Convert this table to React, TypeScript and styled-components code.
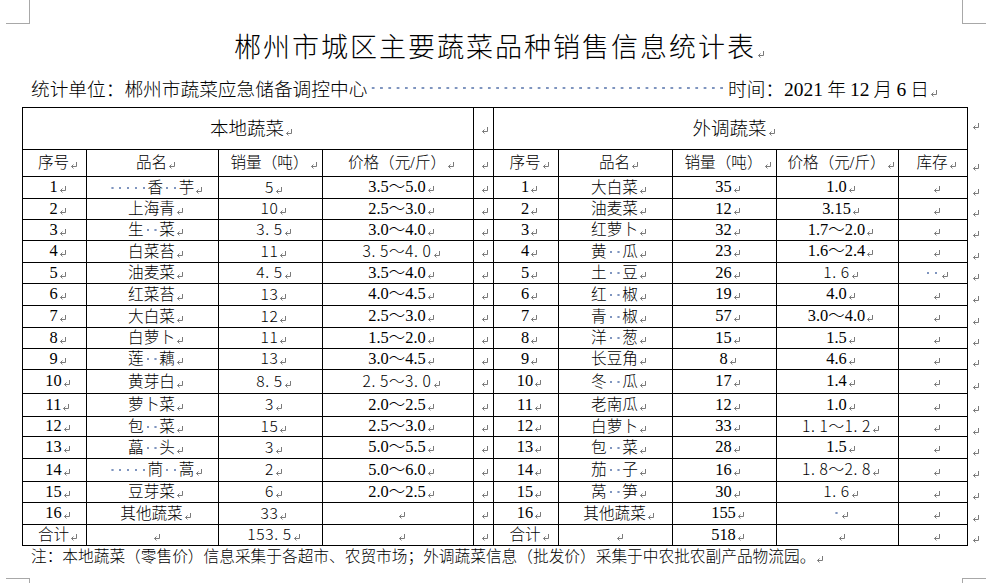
import React from 'react'
import styled, { createGlobalStyle } from 'styled-components'

const GlobalStyle = createGlobalStyle`
  html, body {
    margin: 0;
    padding: 0;
    background: #fff;
  }
  body {
    font-family: 'Noto Sans CJK SC', sans-serif;
    font-weight: 300;
    color: #000;
  }
`

const Page = styled.div`
  position: relative;
  width: 1001px;
  height: 583px;
  overflow: hidden;
  background: #fff;
`

// Word's page-corner crop marks
const Corner = styled.div<{ $pos: 'tl' | 'tr' | 'bl' | 'br' }>`
  position: absolute;
  width: 23px;
  height: 23px;
  border: 0 solid #a8a8a8;
  ${({ $pos }) =>
    $pos === 'tl'
      ? 'left: 6px; top: 0; border-right-width: 1px; border-bottom-width: 1px;'
      : $pos === 'tr'
      ? 'left: 962px; top: 0; border-left-width: 1px; border-bottom-width: 1px;'
      : $pos === 'bl'
      ? 'left: 6px; top: 578px; border-right-width: 1px; border-top-width: 1px;'
      : 'left: 962px; top: 578px; border-left-width: 1px; border-top-width: 1px;'}
`

const Sheet = styled.div`
  display: flex;
  flex-direction: column;
  width: 945px;
  margin-left: 22px;
  padding-top: 30px;
`

const Title = styled.h1`
  margin: 0;
  height: 32px;
  line-height: 32px;
  padding-left: 10px;
  text-align: center;
  font-size: 27px;
  font-weight: 300;
  letter-spacing: 2px;
  white-space: nowrap;
`

const InfoLine = styled.div`
  display: flex;
  align-items: center;
  margin-top: 12px;
  height: 26px;
  padding: 0 29px 0 9px;
  font-size: 18.7px;
  white-space: nowrap;
`

const Leader = styled.span`
  flex: 1;
  height: 4px;
  margin: 2px 2px 0;
  background-image: radial-gradient(circle, #7f95bf 1.1px, transparent 1.4px);
  background-size: 8.3px 4px;
  background-repeat: repeat-x;
`

const DateNum = styled.span`
  font-family: 'Liberation Serif', serif;
  font-weight: 400;
  font-size: 19.5px;
`

const Grid = styled.table`
  margin-top: 7px;
  border-collapse: collapse;
  table-layout: fixed;
  width: 970px;
`

const Row = styled.tr<{ $h: number }>`
  height: ${({ $h }) => $h}px;
`

const Cell = styled.td<{ $big?: boolean; $mid?: boolean }>`
  border: 1px solid #000;
  padding: ${({ $mid }) => ($mid ? '0 0 0 2px' : '0 0 0 7px')};
  text-align: center;
  vertical-align: middle;
  white-space: nowrap;
  line-height: 1;
  font-family: 'Liberation Serif', 'Noto Sans CJK SC', serif;
  font-size: ${({ $big }) => ($big ? '18.5px' : '16.4px')};
`

const Han = styled.span<{ $big?: boolean }>`
  font-family: 'Noto Sans CJK SC', sans-serif;
  font-size: ${({ $big }) => ($big ? '18.5px' : '15.6px')};
`

const Tail = styled.td<{ $top?: boolean }>`
  border: none;
  padding: ${({ $top }) => ($top ? '6px 0 0 3px' : '0 0 0 3px')};
  text-align: left;
  vertical-align: ${({ $top }) => ($top ? 'top' : 'middle')};
  line-height: 1;
`

// digits that Word set in SimSun: thin, evenly spaced
const Song = styled.span`
  font-family: 'Noto Sans CJK SC', sans-serif;
  font-weight: 300;
  font-size: 15.6px;
  letter-spacing: 0.6px;
`

const SpaceDot = styled.span`
  display: inline-block;
  width: 7.8px;
  height: 2px;
  vertical-align: 4px;
  background: radial-gradient(circle, #7f95bf 1px, transparent 1.3px);
`

const Footer = styled.div`
  height: 20px;
  line-height: 20px;
  padding-left: 9px;
  font-size: 15.7px;
  white-space: nowrap;
`

const MarkSvg = styled.svg`
  display: inline-block;
  width: 8px;
  height: 7px;
  margin-left: 1px;
  vertical-align: -1px;
`

function Mark() {
  return (
    <MarkSvg viewBox="0 0 8 7">
      <path d="M6.5 0V4.5H1.5M3.5 2.5L1.5 4.5L3.5 6.5" fill="none" stroke="#7a7a7a" strokeWidth="1" />
    </MarkSvg>
  )
}

type Val = string | { t: string; song: true }
const S = (t: string): Val => ({ t, song: true })

const isHan = (c: string) => /[\u3000-\u9fff\uff00-\uffef]/.test(c)

function Txt({ v }: { v: Val }) {
  if (typeof v !== 'string') return <Song>{v.t}</Song>
  return (
    <>
      {v.split('').map((c, i) =>
        c === '·' ? (
          <SpaceDot key={i} />
        ) : isHan(c) && c !== '～' ? (
          <Han key={i}>{c}</Han>
        ) : (
          <React.Fragment key={i}>{c}</React.Fragment>
        )
      )}
    </>
  )
}

function C({ v, mid }: { v?: Val; mid?: boolean }) {
  return (
    <Cell $mid={mid}>
      {v !== undefined && <Txt v={v} />}
      <Mark />
    </Cell>
  )
}

const local: Val[][] = [
  ['1', '·····香··芋', S('5'), '3.5～5.0'],
  ['2', '上海青', S('10'), '2.5～3.0'],
  ['3', '生··菜', S('3. 5'), '3.0～4.0'],
  ['4', '白菜苔', S('11'), S('3. 5～4. 0')],
  ['5', '油麦菜', S('4. 5'), '3.5～4.0'],
  ['6', '红菜苔', S('13'), '4.0～4.5'],
  ['7', '大白菜', S('12'), '2.5～3.0'],
  ['8', '白萝卜', S('11'), '1.5～2.0'],
  ['9', '莲··藕', S('13'), '3.0～4.5'],
  ['10', '黄芽白', S('8. 5'), S('2. 5～3. 0')],
  ['11', '萝卜菜', S('3'), '2.0～2.5'],
  ['12', '包··菜', S('15'), '2.5～3.0'],
  ['13', '藠··头', S('3'), '5.0～5.5'],
  ['14', '·····茼··蒿', S('2'), '5.0～6.0'],
  ['15', '豆芽菜', S('6'), '2.0～2.5'],
  ['16', '其他蔬菜', S('33'), ''],
  ['合计', '', S('153. 5'), ''],
]

const remote: Val[][] = [
  ['1', '大白菜', '35', '1.0', ''],
  ['2', '油麦菜', '12', '3.15', ''],
  ['3', '红萝卜', '32', '1.7～2.0', ''],
  ['4', '黄··瓜', '23', '1.6～2.4', ''],
  ['5', '土··豆', '26', S('1. 6'), '··'],
  ['6', '红··椒', '19', '4.0', ''],
  ['7', '青··椒', '57', '3.0～4.0', ''],
  ['8', '洋··葱', '15', '1.5', ''],
  ['9', '长豆角', '8', '4.6', ''],
  ['10', '冬··瓜', '17', '1.4', ''],
  ['11', '老南瓜', '12', '1.0', ''],
  ['12', '白萝卜', '33', S('1. 1～1. 2'), ''],
  ['13', '包··菜', '28', '1.5', ''],
  ['14', '茄··子', '16', S('1. 8～2. 8'), ''],
  ['15', '莴··笋', '30', S('1. 6'), ''],
  ['16', '其他蔬菜', '155', '·', ''],
  ['合计', '', '518', '', ''],
]

const heights = [22, 21, 21, 22, 21, 22, 22, 21, 21, 24, 23, 20, 22, 23, 21, 22, 21]
const widths = [64, 132, 104, 151, 20, 65, 114, 104, 122, 69, 25]
const cols = ['序号', '品名', '销量（吨）', '价格（元/斤）']

export default function App() {
  return (
    <Page>
      <GlobalStyle />
      <Corner $pos="tl" />
      <Corner $pos="tr" />
      <Corner $pos="bl" />
      <Corner $pos="br" />
      <Sheet>
        <Title>
          郴州市城区主要蔬菜品种销售信息统计表
          <Mark />
        </Title>
        <InfoLine>
          <span>统计单位：郴州市蔬菜应急储备调控中心</span>
          <Leader />
          <span>
            时间：<DateNum>2021</DateNum> 年 <DateNum>12</DateNum> 月 <DateNum>6</DateNum> 日
            <Mark />
          </span>
        </InfoLine>
        <Grid>
          <colgroup>
            {widths.map((w, i) => (
              <col key={i} style={{ width: w }} />
            ))}
          </colgroup>
          <tbody>
            <Row $h={42}>
              <Cell $big colSpan={4}>
                <Han $big>本地蔬菜</Han>
                <Mark />
              </Cell>
              <C mid />
              <Cell $big colSpan={5}>
                <Han $big>外调蔬菜</Han>
                <Mark />
              </Cell>
              <Tail $top>
                <Mark />
              </Tail>
            </Row>
            <Row $h={27}>
              {cols.map((c) => (
                <C key={'l' + c} v={c} />
              ))}
              <C mid />
              {[...cols, '库存'].map((c) => (
                <C key={'r' + c} v={c} />
              ))}
              <Tail>
                <Mark />
              </Tail>
            </Row>
            {local.map((l, i) => (
              <Row key={i} $h={heights[i]}>
                {l.map((v, j) => (
                  <C key={j} v={v} />
                ))}
                <C mid />
                {remote[i].map((v, j) => (
                  <C key={j} v={v} />
                ))}
                <Tail>
                  <Mark />
                </Tail>
              </Row>
            ))}
          </tbody>
        </Grid>
        <Footer>
          注：本地蔬菜（零售价）信息采集于各超市、农贸市场；外调蔬菜信息（批发价）采集于中农批农副产品物流园。
          <Mark />
        </Footer>
      </Sheet>
    </Page>
  )
}
